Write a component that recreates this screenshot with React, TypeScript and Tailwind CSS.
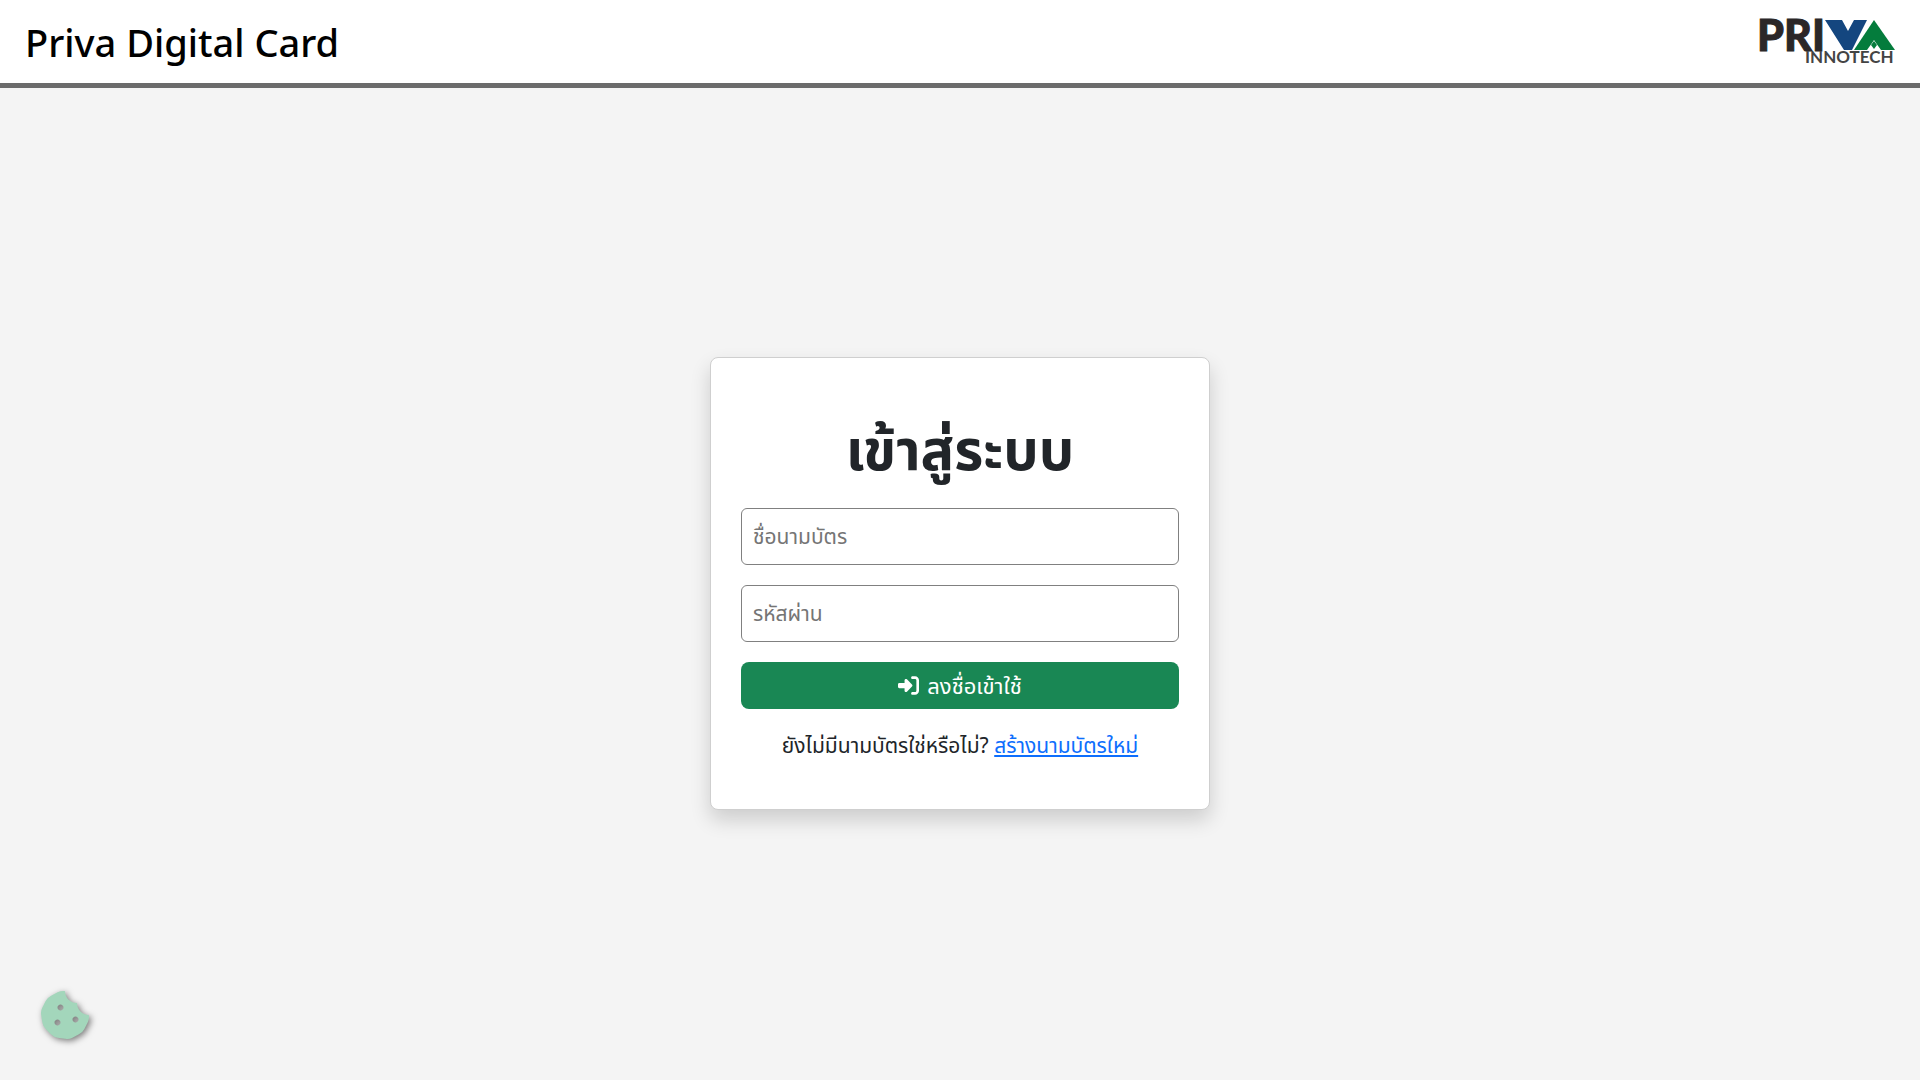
import { FaRightToBracket } from "react-icons/fa6";
import { FaCookieBite } from "react-icons/fa";

function Logo() {
  return (
    <svg width="136" height="50" viewBox="0 0 136 50" role="img" aria-label="Priva Innotech" className="overflow-visible">
      <text x="-3" y="34" fontSize="43" fontWeight="900" fontFamily="Lato, sans-serif" fill="#2b2728" stroke="#2b2728" strokeWidth="1">
        PRI
      </text>
      <text x="45" y="46" fontSize="17" fontWeight="700" fill="#444" fontFamily="Lato, sans-serif">
        INNOTECH
      </text>
      <path d="M65 3H82L88 14L94 3H107L92 33H84Z" fill="#14467f" />
      <path d="M114 3L135 33H94Z" fill="#047c3c" />
      <path d="M107 33L112 26L114 23L116 26L121 33Z" fill="#fff" />
      <path d="M114 24L117 28L114 32L111 28Z" fill="#047c3c" />
    </svg>
  );
}

function Field({ id, label, type }: { id: string; label: string; type: string }) {
  return (
    <input
      id={id}
      type={type}
      aria-label={label}
      placeholder={label}
      className="h-[57px] w-full rounded-md border border-[#808080] bg-white px-[11px] text-[21px] placeholder:text-[#757575]"
    />
  );
}

export default function App() {
  return (
    <div className="flex min-h-screen flex-col bg-[#f4f4f4] font-['Noto_Sans','Noto_Sans_Thai',sans-serif] text-[#212529]">
      <header className="flex h-[88px] items-center justify-between border-b-5 border-[#6b6b6b] bg-white pr-6 pl-[25px]">
        <h1 className="text-[38px] leading-none font-medium text-black">Priva Digital Card</h1>
        <Logo />
      </header>

      <main className="flex grow items-center justify-center pb-0.5">
        <section className="flex w-[500px] flex-col rounded-lg border border-[#cfcfcf] bg-white px-[30px] pt-[60px] pb-12 shadow-[0_10px_20px_rgba(0,0,0,0.16)]">
          <h2 className="text-center text-[56px] leading-[60px] font-bold">เข้าสู่ระบบ</h2>
          <form className="mt-[30px] flex flex-col gap-5">
            <Field id="card-name" label="ชื่อนามบัตร" type="text" />
            <Field id="password" label="รหัสผ่าน" type="password" />
            <button type="button" className="flex h-[47px] items-center justify-center gap-2 rounded-lg bg-[#198754] text-[22px] text-white">
              <FaRightToBracket size={21} />
              ลงชื่อเข้าใช้
            </button>
          </form>
          <p className="mt-5 text-center text-[21px] leading-8">
            ยังไม่มีนามบัตรใช่หรือไม่?{" "}
            <a href="#create" className="text-[#0d6efd] underline">สร้างนามบัตรใหม่</a>
          </p>
        </section>
      </main>

      <button type="button" aria-label="Cookie settings" className="fixed bottom-[41px] left-[41px] text-[#a3d6bb]">
        <FaCookieBite size={48} className="drop-shadow-[2px_2px_3px_rgba(0,0,0,0.5)]" />
      </button>
    </div>
  );
}
